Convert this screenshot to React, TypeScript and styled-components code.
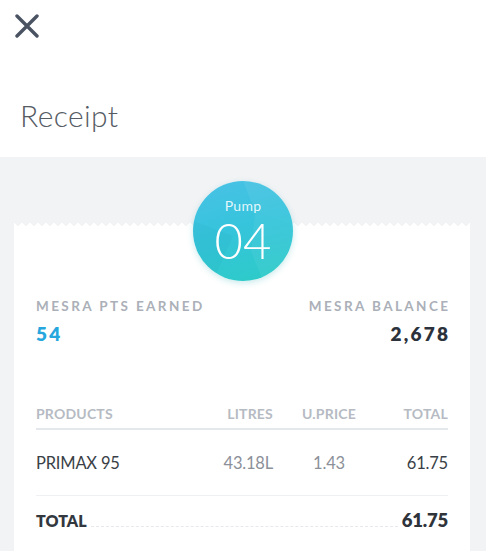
import React from "react";
import styled, { createGlobalStyle } from "styled-components";

const GlobalStyle = createGlobalStyle`
  body {
    margin: 0;
    font-family: Lato, "Open Sans", sans-serif;
    background: #ffffff;
  }
`;

const Page = styled.div`
  width: 486px;
  height: 551px;
  display: flex;
  flex-direction: column;
  overflow: hidden;
`;

const Header = styled.header`
  height: 157px;
  flex-shrink: 0;
  background: #ffffff;
  padding: 14px 0 0 20px;
  box-sizing: border-box;
`;

const CloseButton = styled.button`
  display: block;
  width: 24px;
  height: 24px;
  padding: 0;
  margin-left: -5px;
  border: 0;
  background: none;
  cursor: pointer;
`;

const Title = styled.h1`
  margin: 59px 0 0;
  font-size: 30px;
  line-height: 36px;
  font-weight: 300;
  color: #555b63;
  letter-spacing: 0.4px;
`;

const Body = styled.main`
  flex: 1;
  background: #f2f3f5;
  padding: 71px 16px 0 14px;
  display: flex;
  flex-direction: column;
`;

const Card = styled.section`
  position: relative;
  flex: 1;
  background: #ffffff;
  padding: 70px 22px 0;

  &::before {
    content: "";
    position: absolute;
    left: 0;
    right: 0;
    top: -5px;
    height: 5px;
    background:
      linear-gradient(-45deg, #ffffff 3.6px, transparent 0),
      linear-gradient(45deg, #ffffff 3.6px, transparent 0);
    background-position: left bottom;
    background-size: 8px 8px;
    background-repeat: repeat-x;
  }
`;

const PumpBadge = styled.div`
  position: absolute;
  left: 50%;
  top: -47px;
  width: 100px;
  height: 100px;
  margin-left: -49px;
  border-radius: 50%;
  overflow: hidden;
  background: linear-gradient(165deg, #4ac1e6 0%, #36c4dc 45%, #2cccc6 100%);
  box-shadow: 0 2px 6px rgba(40, 170, 180, 0.25);
  display: flex;
  flex-direction: column;
  align-items: center;
  color: #ffffff;
`;

const Facets = styled.svg`
  position: absolute;
  inset: 0;
`;

const PumpLabel = styled.span`
  position: relative;
  margin-top: 17px;
  font-size: 14px;
  line-height: 16px;
  letter-spacing: 0.3px;
  color: rgba(255, 255, 255, 0.88);
`;

const PumpNumber = styled.span`
  position: relative;
  margin-top: 6px;
  font-size: 49px;
  line-height: 40px;
  font-weight: 300;
`;

const PointsRow = styled.div`
  display: flex;
  justify-content: space-between;
`;

const PointsBlock = styled.div<{ $right?: boolean }>`
  display: flex;
  flex-direction: column;
  align-items: ${(p) => (p.$right ? "flex-end" : "flex-start")};
`;

const PointsLabel = styled.span`
  font-size: 13.5px;
  line-height: 16px;
  font-weight: 700;
  letter-spacing: 2.4px;
  color: #abb0b8;
  margin-right: -2.4px;
`;

const PointsValue = styled.span<{ $accent?: boolean }>`
  margin-top: 9px;
  font-size: 19px;
  line-height: 22px;
  font-weight: 800;
  letter-spacing: 2.2px;
  margin-right: -2.2px;
  color: ${(p) => (p.$accent ? "#25a7de" : "#2c323b")};
`;

const Table = styled.div`
  margin-top: 59px;
`;

const Row = styled.div<{ $head?: boolean }>`
  display: grid;
  grid-template-columns: 1fr 90px 92px 73px;
  align-items: center;
  border-bottom: ${(p) => (p.$head ? "2px solid #e4e7eb" : "1px solid #eef0f3")};
  height: ${(p) => (p.$head ? "26px" : "66px")};
  box-sizing: border-box;
  padding-bottom: ${(p) => (p.$head ? "6px" : "0")};
`;

const Cell = styled.span<{ $align?: "left" | "right" | "center"; $head?: boolean; $main?: boolean; $pad?: number }>`
  text-align: ${(p) => p.$align || "left"};
  padding-right: ${(p) => p.$pad || 0}px;
  font-size: ${(p) => (p.$head ? "14px" : "16.5px")};
  font-weight: ${(p) => (p.$head ? 700 : 400)};
  color: ${(p) => (p.$head ? "#b6bbc3" : p.$main ? "#3a3f47" : "#8b9099")};
  letter-spacing: ${(p) => (p.$head ? "0.2px" : "-0.2px")};
`;

const TotalRow = styled.div`
  display: flex;
  align-items: baseline;
  gap: 4px;
  padding-top: 13px;
`;

const TotalLabel = styled.span`
  font-size: 16px;
  font-weight: 800;
  color: #33383f;
`;

const Dots = styled.span`
  flex: 1;
  border-bottom: 1px dashed #e6e8eb;
`;

const TotalValue = styled.span`
  font-size: 18.5px;
  font-weight: 800;
  color: #2f343b;
  letter-spacing: -0.2px;
`;

export default function App() {
  return (
    <Page>
      <GlobalStyle />
      <Header>
        <CloseButton aria-label="Close">
          <svg width="24" height="24" viewBox="0 0 24 24">
            <path d="M2 2 L22 22 M22 2 L2 22" stroke="#4a5362" strokeWidth="3.4" strokeLinecap="round" fill="none" />
          </svg>
        </CloseButton>
        <Title>Receipt</Title>
      </Header>
      <Body>
        <Card>
          <PumpBadge>
            <Facets viewBox="0 0 100 100" preserveAspectRatio="none">
              <polygon points="50,0 100,0 100,45 62,30" fill="rgba(255,255,255,0.06)" />
              <polygon points="0,40 40,55 20,100 0,100" fill="rgba(0,120,140,0.05)" />
              <polygon points="62,30 100,45 100,100 70,100 58,70" fill="rgba(255,255,255,0.05)" />
            </Facets>
            <PumpLabel>Pump</PumpLabel>
            <PumpNumber>04</PumpNumber>
          </PumpBadge>
          <PointsRow>
            <PointsBlock>
              <PointsLabel>MESRA PTS EARNED</PointsLabel>
              <PointsValue $accent>54</PointsValue>
            </PointsBlock>
            <PointsBlock $right>
              <PointsLabel>MESRA BALANCE</PointsLabel>
              <PointsValue>2,678</PointsValue>
            </PointsBlock>
          </PointsRow>
          <Table>
            <Row $head>
              <Cell $head>PRODUCTS</Cell>
              <Cell $head $align="right" $pad={10}>LITRES</Cell>
              <Cell $head $align="center">U.PRICE</Cell>
              <Cell $head $align="right">TOTAL</Cell>
            </Row>
            <Row>
              <Cell $main>PRIMAX 95</Cell>
              <Cell $align="right" $pad={10}>43.18L</Cell>
              <Cell $align="center">1.43</Cell>
              <Cell $main $align="right">61.75</Cell>
            </Row>
            <TotalRow>
              <TotalLabel>TOTAL</TotalLabel>
              <Dots />
              <TotalValue>61.75</TotalValue>
            </TotalRow>
          </Table>
        </Card>
      </Body>
    </Page>
  );
}
